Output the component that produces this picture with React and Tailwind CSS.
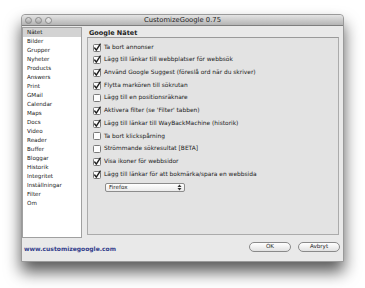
const sections = [
  'Nätet', 'Bilder', 'Grupper', 'Nyheter', 'Products', 'Answers', 'Print', 'GMail',
  'Calendar', 'Maps', 'Docs', 'Video', 'Reader', 'Buffer', 'Bloggar', 'Historik',
  'Integritet', 'Inställningar', 'Filter', 'Om',
];

const options = [
  { label: 'Ta bort annonser', checked: true },
  { label: 'Lägg till länkar till webbplatser för webbsök', checked: true },
  { label: 'Använd Google Suggest (föreslå ord när du skriver)', checked: true },
  { label: 'Flytta markören till sökrutan', checked: true },
  { label: 'Lägg till en positionsräknare', checked: false },
  { label: "Aktivera filter (se 'Filter' tabben)", checked: true },
  { label: 'Lägg till länkar till WayBackMachine (historik)', checked: true },
  { label: 'Ta bort klickspårning', checked: false },
  { label: 'Strömmande sökresultat [BETA]', checked: false },
  { label: 'Visa ikoner för webbsidor', checked: true },
  { label: 'Lägg till länkar för att bokmärka/spara en webbsida', checked: true },
];

function Checkbox({ checked }) {
  return (
    <svg width="8" height="8" viewBox="0 0 8 8" className="shrink-0 overflow-visible">
      <rect x="0.5" y="0.5" width="7" height="7" rx="1" fill="#fdfdfd" stroke="#7a7a7a" />
      {checked && (
        <path d="M1.7 4 L3.3 6.2 L7.2 0.2" stroke="#1e1e1e" strokeWidth="1.4" fill="none" strokeLinecap="round" strokeLinejoin="round" />
      )}
    </svg>
  );
}

function Button({ children }) {
  return (
    <button className="h-[10px] w-[42px] rounded-full border border-[#8a8a8a] bg-gradient-to-b from-white to-[#e2e2e2] text-[5.6px] leading-none text-[#222] flex items-center justify-center">
      {children}
    </button>
  );
}

export default function App() {
  return (
    <div className="w-[365px] h-[288px] bg-white overflow-hidden pt-[14px] pl-[21px] font-['DejaVu_Sans',sans-serif] text-[#1a1a1a]">
      <div className="w-[323px] h-[248px] flex flex-col bg-[#e9e9e9] rounded-t-[4px] shadow-[0_10px_16px_rgba(0,0,0,0.65)] border border-[#9a9a9a]">
        {/* title bar */}
        <div className="h-[12px] relative flex items-center justify-center rounded-t-[4px] bg-gradient-to-b from-[#e4e4e4] to-[#b4b4b4] border-b border-[#7e7e7e]">
          <div className="absolute left-[3px] top-[2px] flex gap-[3px]">
            {[0, 1, 2].map((i) => (
              <span key={i} className={`w-[7px] h-[7px] rounded-full border border-[#8a8a8a] bg-gradient-to-b ${i === 2 ? 'from-[#ececec] to-[#cfcfcf]' : 'from-[#dcdcdc] to-[#a4a4a4]'}`} />
            ))}
          </div>
          <span className="text-[6.8px] leading-none text-[#222]">CustomizeGoogle 0.75</span>
        </div>

        <div className="flex flex-1 pt-[1px]">
          {/* sidebar */}
          <div className="w-[60px] h-[211px] bg-white border border-[#a0a0a0]">
            {sections.map((s, i) => (
              <div key={s} className={`h-[9px] pl-[4px] flex items-center text-[5.6px] leading-none ${i === 0 ? 'bg-[#d3d3d3]' : ''}`}>
                {s}
              </div>
            ))}
          </div>

          {/* main panel */}
          <div className="ml-[5px] w-[252px] flex flex-col">
            <div className="h-[10px] pl-[2px] pt-[2px] flex items-center text-[6.5px] leading-none font-semibold text-[#222]">
              Google Nätet
            </div>
            <div className="h-[198px] bg-[#e3e3e3] border border-[#ababab] border-t-[#9a9a9a] pl-[5px] pt-[3px]">
              {options.map((o) => (
                <div key={o.label} className="h-[12.7px] flex items-center gap-[3px] text-[5.9px] leading-none whitespace-nowrap">
                  <Checkbox checked={o.checked} />
                  <span>{o.label}</span>
                </div>
              ))}
              <div className="mt-[2px] ml-[12px] w-[80px] h-[9px] rounded-[2px] border border-[#8c8c8c] bg-gradient-to-b from-white to-[#ebebeb] flex items-center justify-between pl-[3px] pr-[2px]">
                <span className="text-[5.6px] leading-none">Firefox</span>
                <svg width="5" height="7" viewBox="0 0 5 7">
                  <path d="M0.5 3 L2.5 0.6 L4.5 3 Z" fill="#333" />
                  <path d="M0.5 4 L2.5 6.4 L4.5 4 Z" fill="#333" />
                </svg>
              </div>
            </div>
          </div>
        </div>

        {/* footer */}
        <div className="h-[24px] flex items-center justify-between pl-[2px] pr-[3px] pb-[2px]">
          <span className="text-[6px] leading-none text-[#34408c] font-semibold">www.customizegoogle.com</span>
          <div className="flex gap-[7px] -mt-[3px]">
            <Button>OK</Button>
            <Button>Avbryt</Button>
          </div>
        </div>
      </div>
    </div>
  );
}
